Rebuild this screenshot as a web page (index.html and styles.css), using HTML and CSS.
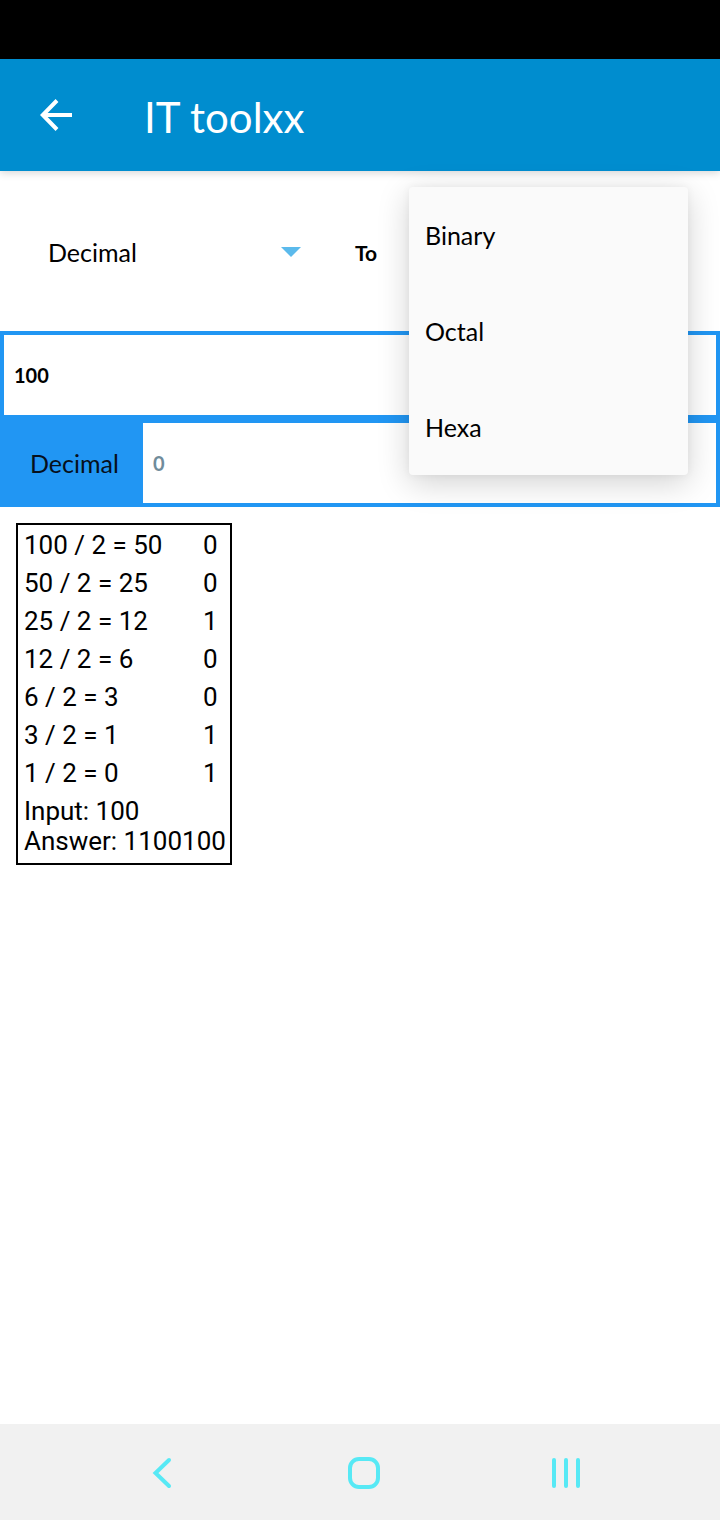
FILE: index.html
```html
<!DOCTYPE html>
<html lang="en">
<head>
<meta charset="utf-8">
<meta name="viewport" content="width=device-width, initial-scale=1">
<title>IT toolxx</title>
<link rel="stylesheet" href="styles.css">
</head>
<body>
<div class="screen">
  <div class="status-bar"></div>
  <header class="app-bar">
    <button class="back" type="button" aria-label="Back">
      <svg width="32" height="32" viewBox="0 0 32 32"><path d="M32 16H4M17 1.500L2.800 16 17 30.500" fill="none" stroke="#fff" stroke-width="4"/></svg>
    </button>
    <h1 class="title">IT toolxx</h1>
  </header>
  <main class="content">
    <div class="convert">
      <div class="from">
        <select class="from-select" aria-label="Convert from">
          <option>Decimal</option>
        </select>
        <svg class="caret" width="20" height="10" viewBox="0 0 20 10"><path d="M0 0h20L10 10z" fill="#5bbaec"/></svg>
      </div>
      <span class="to">To</span>
      <div class="menu" role="listbox" aria-label="Convert to">
        <button class="menu-item" type="button" role="option">Binary</button>
        <button class="menu-item" type="button" role="option">Octal</button>
        <button class="menu-item" type="button" role="option">Hexa</button>
      </div>
    </div>
    <div class="fields">
      <input class="field" type="text" value="100" aria-label="Number">
      <div class="result-row">
        <label class="result-label" for="result">Decimal</label>
        <input class="field" id="result" type="text" placeholder="0">
      </div>
    </div>
    <div class="steps">
      <table class="steps-table">
        <tbody>
          <tr><td>100 / 2 = 50</td><td class="bit">0</td></tr>
          <tr><td>50 / 2 = 25</td><td class="bit">0</td></tr>
          <tr><td>25 / 2 = 12</td><td class="bit">1</td></tr>
          <tr><td>12 / 2 = 6</td><td class="bit">0</td></tr>
          <tr><td>6 / 2 = 3</td><td class="bit">0</td></tr>
          <tr><td>3 / 2 = 1</td><td class="bit">1</td></tr>
          <tr><td>1 / 2 = 0</td><td class="bit">1</td></tr>
          <tr><td colspan="2">Input: 100<br>Answer: 1100100</td></tr>
        </tbody>
      </table>
    </div>
  </main>
  <nav class="nav-bar">
    <button type="button" aria-label="Back"><svg width="32" height="32" viewBox="0 0 32 32"><path d="M23 3L9.500 16 23 29" /></svg></button>
    <button type="button" aria-label="Home"><svg width="32" height="32" viewBox="0 0 32 32"><rect x="2" y="2" width="28" height="28" rx="9"/></svg></button>
    <button type="button" aria-label="Recents"><svg width="32" height="32" viewBox="0 0 32 32"><path d="M4 3v26M16 3v26M28 3v26"/></svg></button>
  </nav>
</div>
</body>
</html>
```
FILE: styles.css
```css
* {
  box-sizing: border-box;
}

body {
  margin: 0;
  background: #fff;
  color: #000;
  font-family: Lato, sans-serif;
  font-size: 25px;
}

button,
input,
select {
  margin: 0;
  padding: 0;
  border: 0;
  border-radius: 0;
  background: none;
  color: inherit;
  font: inherit;
}

.screen {
  display: flex;
  flex-direction: column;
  min-height: 100vh;
}

.status-bar {
  height: 59px;
  background: #000;
}

.app-bar {
  display: flex;
  align-items: center;
  gap: 72px;
  height: 112px;
  padding: 4px 40px 0;
  background: #008dcf;
  color: #fff;
  box-shadow: 0 2px 8px rgba(0, 0, 0, 0.16);
}

.back {
  display: flex;
  padding-bottom: 4px;
}

.title {
  margin: 0;
  font-size: 42px;
  font-weight: 400;
}

.content {
  flex: 1;
}

.convert {
  position: relative;
  display: flex;
  align-items: center;
  gap: 54px;
  height: 160px;
  padding: 2px 48px 0;
}

.from {
  display: flex;
  align-items: center;
  width: 253px;
}

.from-select {
  flex: 1;
  appearance: none;
}

.caret {
  margin-left: -20px;
  pointer-events: none;
}

.to {
  font-size: 21px;
  font-weight: 700;
}

.menu {
  position: absolute;
  z-index: 1;
  top: 16px;
  right: 32px;
  display: grid;
  width: 279px;
  background: #fafafa;
  border-radius: 4px;
  box-shadow: 0 8px 32px rgba(0, 0, 0, 0.18), 0 0 8px rgba(0, 0, 0, 0.05);
}

.menu-item {
  height: 96px;
  padding: 0 16px;
  text-align: left;
}

.fields {
  background: #2196f3;
}

.field {
  flex: 1;
  width: 100%;
  min-width: 0;
  height: 88px;
  padding: 0 10px;
  border: 4px solid #2196f3;
  background: #fff;
  font-size: 20px;
  font-weight: 700;
}

.field::placeholder {
  color: #708c9b;
  opacity: 1;
}

.fields > .field {
  display: block;
}

.result-row {
  display: flex;
  align-items: center;
}

.result-label {
  width: 139px;
  padding-left: 30px;
  color: #06101c;
}

.steps {
  width: fit-content;
  margin: 16px;
  padding: 1px 4px 3px 6px;
  border: 2px solid #000;
  font-family: Roboto, sans-serif;
  font-size: 26px;
  line-height: 30px;
}

.steps-table {
  border-collapse: collapse;
}

.steps-table td {
  padding: 4px 0;
}

.steps-table .bit {
  width: 23px;
}

.nav-bar {
  display: grid;
  grid-template-columns: repeat(3, 28%);
  justify-content: center;
  gap: 3px;
  height: 96px;
  padding: 2px 0 0 8px;
  background: #f1f1f1;
}

.nav-bar button {
  display: grid;
  place-items: center;
}

.nav-bar svg {
  fill: none;
  stroke: #57e9f5;
  stroke-width: 4;
  stroke-linecap: round;
}
```
